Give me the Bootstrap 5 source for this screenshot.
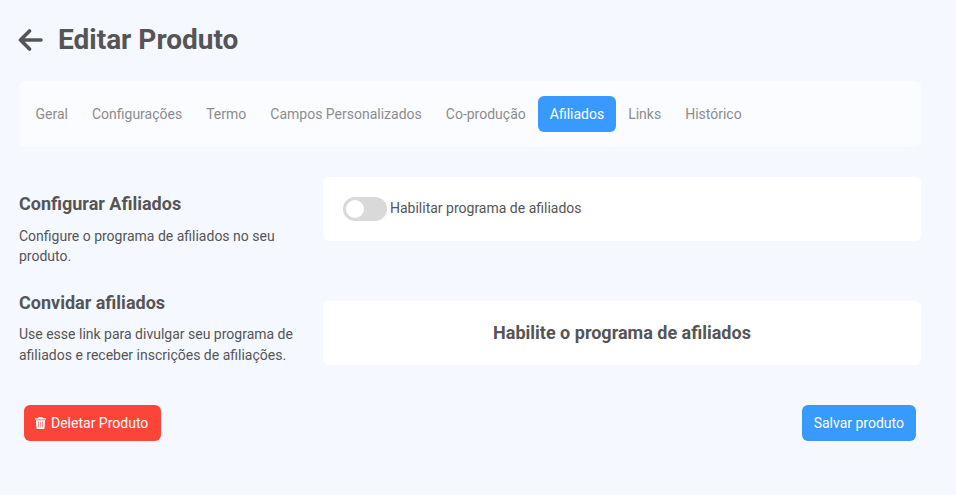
<!DOCTYPE html>
<html lang="pt"><head><meta charset="utf-8">
<link href="https://cdn.jsdelivr.net/npm/bootstrap@5.3.0/dist/css/bootstrap.min.css" rel="stylesheet">
<style>
html,body{height:100%}
body{background:#f5f8ff;font-family:Roboto,sans-serif;color:#555;font-size:14px;overflow:hidden}
.shell{padding:20px 35px 0 19px}
.page-head{height:40px;gap:15px;margin-bottom:21px}
.page-head h1{font-size:28px;font-weight:700;margin:0;color:#555;line-height:40px}
.back-ico{width:25px;height:24px;display:block;margin-left:-1px}
.tabbar{background:#fbfcff;border-radius:6px;height:66px;padding:0 4.500px;margin-bottom:30px}
.tabbar .nav-link{color:#8c8c8c;font-size:14px;padding:0 12px;height:36px;line-height:36px;border-radius:6px}
.tabbar .nav-link.active{background:#3899ff;color:#fff}
.side{width:304px;flex:none;padding-right:24px}
.side h2{font-size:18px;font-weight:700;color:#555;margin:0 0 10px;line-height:22px}
.side p{font-size:14px;line-height:21px;margin:0;color:#555}
.panel{background:#fff;border-radius:6px;flex:1;height:64px}
.rowa{height:64px;margin-bottom:60px}
.rowa .side{padding-top:16px}
.rowa .side h2{margin-bottom:11px}
.rowa .side p{line-height:20px}
.rowb{height:64px;margin-bottom:40px}
.rowb .side{margin-top:-9px}
.switcher{width:44px;height:24px;border-radius:12px;background:#d9d9d9;margin-left:20px;padding:3px;flex:none}
.switcher span{display:block;width:18px;height:18px;border-radius:50%;background:#fff}
.sw-label{font-size:14px;color:#555;margin-left:3px;line-height:22px;padding-bottom:2px}
.panel-msg{font-size:18px;font-weight:700;color:#555;padding-bottom:2px}
.act{height:36px;border:0;border-radius:6px;color:#fff;font-size:14px;padding:0 12px;display:flex;align-items:center}
.act-del{background:#fb4539;margin-left:5px;padding-left:11px;padding-right:13px}
.act-del svg{width:11px;height:12px;margin-right:5px}
.act-save{background:#3899ff;margin-right:5px}
.act:hover{color:#fff}
</style></head>
<body>
<div class="shell">
  <div class="page-head d-flex align-items-center">
    <svg class="back-ico" viewBox="0 0 25 24" fill="none" stroke="#555" stroke-width="3.6" stroke-linecap="round" stroke-linejoin="round"><path d="M23 12H2.500M11.500 3l-9 9 9 9"/></svg>
    <h1>Editar Produto</h1>
  </div>
  <ul class="nav tabbar align-items-center">
    <li class="nav-item"><a class="nav-link" href="#">Geral</a></li>
    <li class="nav-item"><a class="nav-link" href="#">Configurações</a></li>
    <li class="nav-item"><a class="nav-link" href="#">Termo</a></li>
    <li class="nav-item"><a class="nav-link" href="#">Campos Personalizados</a></li>
    <li class="nav-item"><a class="nav-link" href="#">Co-produção</a></li>
    <li class="nav-item"><a class="nav-link active" href="#">Afiliados</a></li>
    <li class="nav-item"><a class="nav-link" href="#">Links</a></li>
    <li class="nav-item"><a class="nav-link" href="#">Histórico</a></li>
  </ul>
  <div class="d-flex rowa">
    <div class="side"><h2>Configurar Afiliados</h2><p>Configure o programa de afiliados no seu produto.</p></div>
    <div class="panel d-flex align-items-center"><div class="switcher"><span></span></div><span class="sw-label">Habilitar programa de afiliados</span></div>
  </div>
  <div class="d-flex rowb">
    <div class="side"><h2>Convidar afiliados</h2><p>Use esse link para divulgar seu programa de afiliados e receber inscrições de afiliações.</p></div>
    <div class="panel d-flex align-items-center justify-content-center panel-msg">Habilite o programa de afiliados</div>
  </div>
  <div class="d-flex justify-content-between">
    <button class="btn act act-del"><svg viewBox="0 0 12 13" fill="#fff"><path d="M4 0h4l.6 1.300H12v1.400H0V1.300h3.400zM1 3.600h10l-.6 8.400a1 1 0 0 1-1 1H2.600a1 1 0 0 1-1-1z"/><path fill="#fb8f86" d="M3.300 5h1v6.500h-1zM5.500 5h1v6.500h-1zM7.700 5h1v6.500h-1z"/></svg>Deletar Produto</button>
    <button class="btn act act-save">Salvar produto</button>
  </div>
</div>
<script src="https://cdn.jsdelivr.net/npm/bootstrap@5.3.0/dist/js/bootstrap.bundle.min.js"></script>
</body></html>
